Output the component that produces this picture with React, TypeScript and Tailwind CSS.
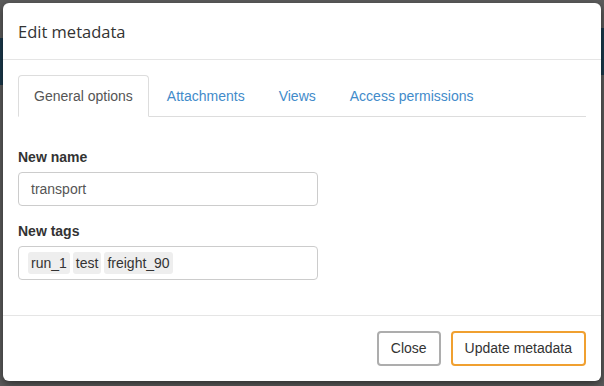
import React from "react";

const tabs = ["General options", "Attachments", "Views", "Access permissions"];
const tags = ["run_1", "test", "freight_90"];

export default function App() {
  return (
    <div className="relative h-[386px] w-[604px] overflow-hidden bg-[#5c5c5c] font-['Liberation_Sans',Arial,sans-serif] text-[14px] text-[#333]">
      {/* page behind the overlay */}
      <div className="absolute left-0 top-[38px] h-[47px] w-[10px] bg-[#1b3a4d]" />
      <div className="absolute right-0 top-[28px] h-[47px] w-[10px] bg-[#1b3a4d]" />

      {/* Modal */}
      <div className="absolute left-[3px] top-[3px] flex h-[378px] w-[598px] flex-col rounded-[6px] bg-white shadow-[0_3px_9px_rgba(0,0,0,0.5)]">
        {/* Header */}
        <div className="border-b border-[#e5e5e5] px-[15px] pb-[14px] pt-[16px]">
          <h4 className="text-[16.5px] leading-[26px] text-[#333] font-['Open_Sans','Noto_Sans',sans-serif]">Edit metadata</h4>
        </div>

        {/* Body */}
        <div className="flex-1 px-[15px] pt-[15px]">
          <ul className="flex h-[42px] border-b border-[#ddd]">
            {tabs.map((t, i) =>
              i === 0 ? (
                <li
                  key={t}
                  className="-mb-px mr-[2px] rounded-t-[4px] border border-[#ddd] border-b-white bg-white px-[15px] py-[10px] leading-[20px] text-[#555]"
                >
                  {t}
                </li>
              ) : (
                <li key={t} className="mr-[2px] border border-transparent px-[15px] py-[10px] leading-[20px] text-[#428bca]">
                  {t}
                </li>
              )
            )}
          </ul>

          <div className="pt-[30px]">
            <div className="mb-[15px] w-[300px]">
              <label className="mb-[5px] block font-bold leading-[20px]">New name</label>
              <div className="flex h-[34px] items-center rounded-[4px] border border-[#ccc] px-[12px] text-[#555]">
                transport
              </div>
            </div>
            <div className="w-[300px]">
              <label className="mb-[5px] block font-bold leading-[20px]">New tags</label>
              <div className="flex h-[34px] items-center gap-[3px] rounded-[4px] border border-[#ccc] px-[9px]">
                {tags.map((t) => (
                  <span key={t} className="rounded-[3px] bg-[#eee] px-[3px] leading-[22px] text-[#333]">
                    {t}
                  </span>
                ))}
              </div>
            </div>
          </div>
        </div>

        {/* Footer */}
        <div className="flex justify-end gap-[10px] border-t border-[#e5e5e5] p-[15px]">
          <button className="h-[35px] rounded-[4px] border-2 border-[#adadad] bg-white px-[12px] text-[#333]">
            Close
          </button>
          <button className="h-[35px] rounded-[4px] border-2 border-[#f0a030] bg-white px-[12px] text-[#333]">
            Update metadata
          </button>
        </div>
      </div>
    </div>
  );
}
